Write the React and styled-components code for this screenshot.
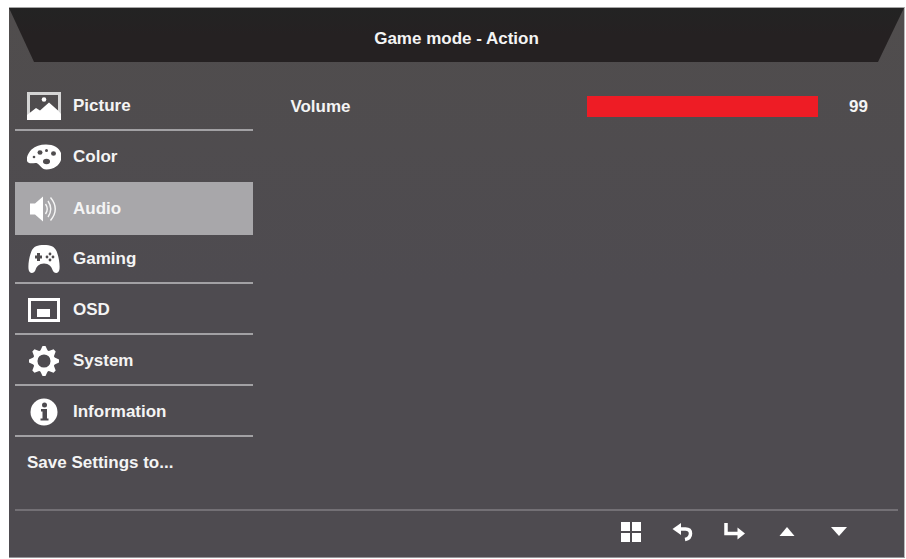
import { useState } from "react";
import styled, { createGlobalStyle } from "styled-components";

const GlobalStyle = createGlobalStyle`
  * {
    box-sizing: border-box;
  }
  body {
    margin: 0;
    background: #fff;
    color: #f4f4f4;
    font: bold 17px/20px "Liberation Sans", Arial, sans-serif;
  }
  button,
  input {
    margin: 0;
    font: inherit;
    color: inherit;
  }
`;

const Page = styled.div`
  min-height: 100vh;
  padding: 7px 1px 1px 9px;
  display: flex;
`;

const Panel = styled.div`
  flex: 1;
  display: flex;
  flex-direction: column;
  border-top: 1px solid #a5a5a5;
  border-right: 1px solid #b9b7ba;
  border-bottom: 1px solid #98969a;
  background: linear-gradient(#504d4d, #4e4b50 50%);
`;

const Header = styled.header`
  height: 54px;
  display: flex;
  align-items: center;
  justify-content: center;
  background: linear-gradient(#232323, #252122 50%);
  clip-path: polygon(0 0, 100% 0, calc(100% - 26px) 100%, 25px 100%);

  h1 {
    margin: 0;
    padding-top: 8px;
    font: inherit;
  }
`;

const Content = styled.div`
  flex: 1;
  display: flex;
  padding: 18px 6px 0 6px;
`;

const Menu = styled.nav`
  width: 27%;
  min-width: 210px;
  display: flex;
  flex-direction: column;
`;

const MenuItem = styled.button`
  height: 51px;
  padding: 2px 12px 0 12px;
  display: flex;
  align-items: center;
  gap: 12px;
  border: 0;
  border-bottom: 2px solid #a2a1a4;
  background: none;
  text-align: left;
  cursor: pointer;

  /* the highlight covers the line of the row */
  &[aria-current="page"] {
    height: 53px;
    margin-bottom: -2px;
    border-color: #a8a7aa;
    background: #a8a7aa;
  }
  &:has(+ [aria-current="page"]) {
    border-color: transparent;
  }
  &:last-child {
    border-color: transparent;
  }
`;

const MenuIcon = styled.svg`
  flex: none;
  width: 34px;
  height: 32px;
  fill: #fff;
`;

const Settings = styled.main`
  flex: 1;
  padding: 16px 30px 0 37px;
`;

const SettingRow = styled.div`
  display: flex;
  align-items: center;

  label {
    flex: 1;
  }
  output {
    width: 50px;
    text-align: right;
  }
`;

const Slider = styled.input`
  appearance: none;
  width: 40%;
  height: 21px;
  background: linear-gradient(#ee1c25, #ee1c25) no-repeat left / ${(props) => props.$fill}% 100%;
  cursor: pointer;

  &::-webkit-slider-thumb {
    appearance: none;
    width: 1px;
    height: 21px;
  }
`;

const Footer = styled.footer`
  margin: 0 6px;
  padding: 0 33px 8px 0;
  display: flex;
  justify-content: flex-end;
  border-top: 2px solid #737075;
`;

const KeyButton = styled.button`
  width: 52px;
  height: 38px;
  padding: 4px 0 0 0;
  display: grid;
  place-items: center;
  border: 0;
  background: none;
  cursor: pointer;

  svg {
    width: 24px;
    height: 24px;
    fill: #fff;
  }
`;

const icons = {
  picture: (
    <>
      <path d="M1.500 3.500H32.500V28.500H1.500Z" fill="none" stroke="#d4d4d4" strokeWidth="3" />
      <path d="M0 30V25L9 18L13 20.500L22 12.500L31 20.500L34 24V30Z" />
      <circle cx="17" cy="9.500" r="2.300" />
    </>
  ),
  color: (
    <>
      <path d="M19 3.500C28 3.500 34.500 8 34.500 15.500C34.500 23 28 28.500 19.500 28.500C14 28.500 13.500 23.500 9.500 22C6.500 21.500 2 24 0 20C-1 16.500 1.500 11.500 4.500 8.500C8.500 5 13 3.500 19 3.500Z" />
      <g fill="#4f4c4e">
        <circle cx="7" cy="16" r="1.300" />
        <ellipse cx="13" cy="11.500" rx="2.500" ry="2.200" />
        <circle cx="19.500" cy="9.500" r="1.500" />
        <ellipse cx="26.500" cy="12.500" rx="2.500" ry="2.200" />
        <ellipse cx="19.500" cy="20.500" rx="3.500" ry="2.800" />
      </g>
    </>
  ),
  audio: (
    <>
      <path d="M3 10.500H8L16 3.500V28.500L8 21.500H3Z" />
      <g fill="none" stroke="#f6f6f6" strokeWidth="1.400">
        <path d="M18.500 11Q22 16 18.500 21" />
        <path d="M21 8Q26.500 16 21 24" />
        <path d="M23.500 4.500Q33 16 23.500 27.500" />
      </g>
    </>
  ),
  gaming: (
    <>
      <path d="M17 2C23.500 2 27.500 3.500 29.500 8C31.500 13 33 20 32.500 26C32 31 27 31 25.500 27C24.500 23.500 22 20.500 17 20.500C12 20.500 9.500 23.500 8.500 27C7 31 2 31 1.500 26C1 20 2.500 13 4.500 8C6.500 3.500 10.500 2 17 2Z" />
      <path
        d="M10 10h3v2.500h2v3h-2v2.500h-3v-2.500h-2v-3h2Z"
        fill="#4f4c4e"
      />
      <g fill="#4f4c4e">
        <circle cx="23" cy="11" r="1.400" />
        <circle cx="20" cy="14" r="1.400" />
        <circle cx="26" cy="14" r="1.400" />
        <circle cx="23" cy="17" r="1.400" />
      </g>
    </>
  ),
  osd: (
    <>
      <path fillRule="evenodd" d="M1 4H33V28H1ZM4 7V25H30V7Z" />
      <path d="M10 15H23V23H10Z" />
    </>
  ),
  system: (
    <>
      <circle cx="17" cy="16" r="8.800" fill="none" stroke="#fff" strokeWidth="4.500" />
      {[0, 45, 90, 135, 180, 225, 270, 315].map((angle) => (
        <path
          key={angle}
          d="M12.500 7.500L15.500 1H18.500L21.500 7.500Z"
          transform={`rotate(${angle} 17 16)`}
        />
      ))}
    </>
  ),
  information: (
    <>
      <circle cx="17" cy="16" r="13.500" />
      <g fill="#4e4b50">
        <circle cx="17.500" cy="9" r="2.500" />
        <path d="M14 13H20V22.500H21.500V24.500H13.500V22.500H15.500V15.500H14Z" />
      </g>
    </>
  ),
};

const menuItems = [
  { id: "picture", label: "Picture" },
  { id: "color", label: "Color" },
  { id: "audio", label: "Audio" },
  { id: "gaming", label: "Gaming" },
  { id: "osd", label: "OSD" },
  { id: "system", label: "System" },
  { id: "information", label: "Information" },
  { id: "save", label: "Save Settings to..." },
];

const keys = [
  {
    label: "Menu",
    icon: <path d="M2 2h9v9H2ZM13 2h9v9h-9ZM2 13h9v9H2ZM13 13h9v9h-9Z" />,
  },
  {
    label: "Back",
    icon: (
      <>
        <path d="M1.500 9L10 3V15Z" />
        <path
          d="M8 9H14.500Q19.500 9 19.500 13.500Q19.500 18.500 14 19.500"
          fill="none"
          stroke="#fff"
          strokeWidth="3.500"
        />
      </>
    ),
  },
  {
    label: "Enter",
    icon: (
      <>
        <path d="M3 3V13.500H16" fill="none" stroke="#fff" strokeWidth="3.500" />
        <path d="M22 13.500L14.500 7.500V19.500Z" />
      </>
    ),
  },
  { label: "Up", icon: <path d="M12 7L19.500 16H4.500Z" /> },
  { label: "Down", icon: <path d="M4 7H20L12 16Z" /> },
];

const App = () => {
  const [active, setActive] = useState("audio");
  const [volume, setVolume] = useState(99);

  return (
    <>
      <GlobalStyle />
      <Page>
        <Panel>
          <Header>
            <h1>Game mode - Action</h1>
          </Header>
          <Content>
            <Menu>
              {menuItems.map(({ id, label }) => (
                <MenuItem
                  key={id}
                  type="button"
                  aria-current={active === id ? "page" : undefined}
                  onClick={() => setActive(id)}
                >
                  {icons[id] && (
                    <MenuIcon viewBox="0 0 34 32" aria-hidden="true">
                      {icons[id]}
                    </MenuIcon>
                  )}
                  {label}
                </MenuItem>
              ))}
            </Menu>
            <Settings>
              <SettingRow>
                <label htmlFor="volume">Volume</label>
                <Slider
                  id="volume"
                  type="range"
                  min="0"
                  max="99"
                  value={volume}
                  $fill={(volume / 99) * 100}
                  onChange={(e) => setVolume(Number(e.target.value))}
                />
                <output htmlFor="volume">{volume}</output>
              </SettingRow>
            </Settings>
          </Content>
          <Footer>
            {keys.map(({ label, icon }) => (
              <KeyButton key={label} type="button" aria-label={label}>
                <svg viewBox="0 0 24 24" aria-hidden="true">
                  {icon}
                </svg>
              </KeyButton>
            ))}
          </Footer>
        </Panel>
      </Page>
    </>
  );
};

export default App;
